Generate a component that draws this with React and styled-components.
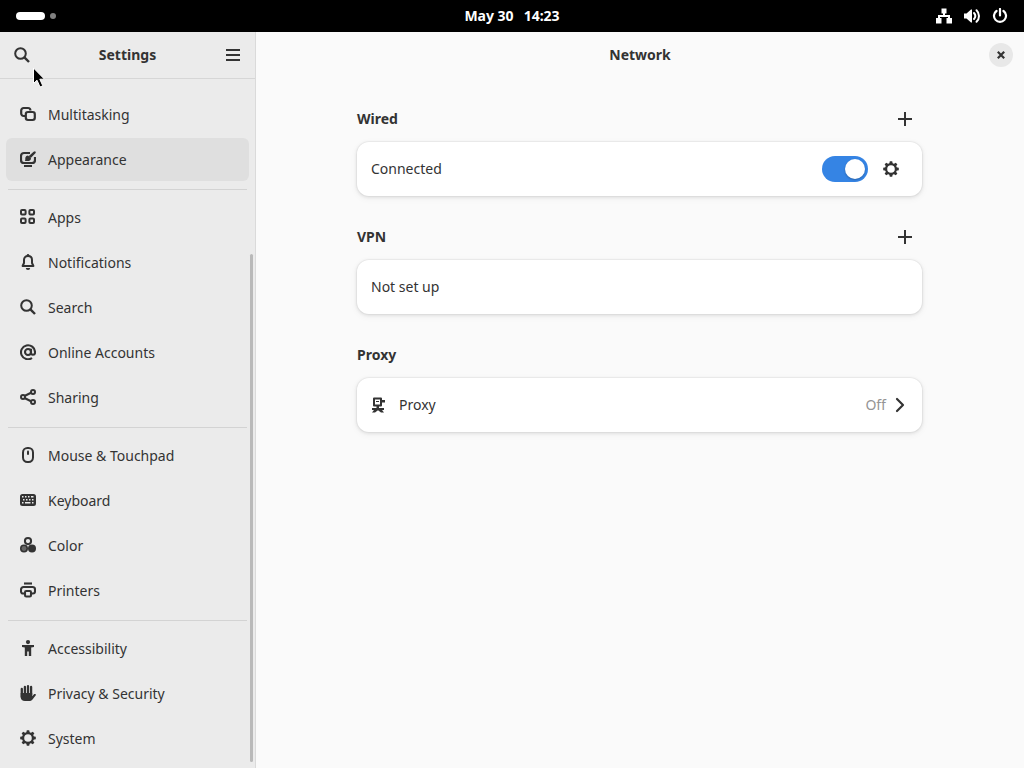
/**
*
* Settings, network panel
*
*/

import React from 'react'
import styled, { createGlobalStyle } from 'styled-components'

const GlobalStyle = createGlobalStyle`
  * {
    box-sizing: border-box;
  }

  body {
    margin: 0;
    background: #fafafa;
    color: #333;
    font-family: 'Noto Sans', 'Open Sans', sans-serif;
    font-size: 14px;
    line-height: 20px;
  }

  button {
    border: none;
    padding: 0;
    background: transparent;
    color: inherit;
    font: inherit;
    cursor: pointer;
  }

  h1, h2 {
    margin: 0;
    font-size: 14px;
    font-weight: 700;
  }
`

const Desktop = styled.div`
  display: flex;
  flex-direction: column;
  height: 100vh;
`

const TopBar = styled.header`
  display: grid;
  grid-template-columns: 1fr auto 1fr;
  align-items: center;
  flex: none;
  height: 32px;
  padding: 0 16px;
  background: #000;
  color: #fff;
`

const Workspaces = styled.button`
  display: flex;
  align-items: center;
  justify-self: start;
  gap: 5px;
`

const WorkspaceDot = styled.span`
  width: ${props => props.$active ? '29px' : '6px'};
  height: ${props => props.$active ? '8px' : '6px'};
  border-radius: 4px;
  background: ${props => props.$active ? '#fff' : '#808080'};
`

const Clock = styled.button`
  display: flex;
  gap: 10px;
  font-weight: 700;
`

const Status = styled.button`
  display: flex;
  justify-self: end;
  gap: 12px;
`

const Window = styled.div`
  display: flex;
  flex: 1;
  min-height: 0;
`

const Sidebar = styled.aside`
  position: relative;
  display: flex;
  flex-direction: column;
  flex: none;
  width: 256px;
  border-right: 1px solid #dadada;
  background: #ebebeb;
`

const HeaderBar = styled.div`
  display: grid;
  grid-template-columns: 34px 1fr 34px;
  align-items: center;
  flex: none;
  height: 47px;
  padding: 0 ${props => props.$line ? '5px' : '6px'};
  border-bottom: 1px solid ${props => props.$line ? '#d6d6d6' : 'transparent'};

  h1 {
    grid-column: 2;
    text-align: center;
  }
`

const IconButton = styled.button`
  display: flex;
  align-items: center;
  justify-content: center;
  width: 34px;
  height: 34px;
  border-radius: 8px;

  &:hover {
    background: rgba(0, 0, 0, 0.06);
  }
`

const CloseButton = styled(IconButton)`
  justify-self: center;
  width: 24px;
  height: 24px;
  border-radius: 12px;
  background: #e8e8e8;
`

const Nav = styled.nav`
  display: flex;
  flex-direction: column;
  flex: 1;
  gap: 2px;
  min-height: 0;
  padding: 14px 6px 8px;
  overflow: hidden;
`

const NavItem = styled.a`
  display: flex;
  align-items: center;
  flex: none;
  gap: 12px;
  height: 43px;
  padding: 0 14px;
  border-radius: 6px;
  background: ${props => props.$selected ? '#dfdfdf' : 'transparent'};
  color: inherit;
  text-decoration: none;

  svg {
    margin-bottom: 1px;
  }
`

const Separator = styled.hr`
  flex: none;
  align-self: stretch;
  height: 1px;
  margin: 6px 2px 4px;
  border: none;
  background: #d3d3d3;
`

const ScrollThumb = styled.div`
  position: absolute;
  right: 2px;
  bottom: 6px;
  width: 3px;
  height: 69%;
  border-radius: 2px;
  background: #b9b9b9;
`

const Main = styled.main`
  flex: 1;
  min-width: 0;
`

const Content = styled.div`
  display: flex;
  flex-direction: column;
  gap: 24px;
  max-width: 590px;
  margin: 0 auto;
  padding: 23px 13px 23px 12px;
`

const SectionHead = styled.div`
  display: flex;
  align-items: center;
  justify-content: space-between;
  height: 34px;
  margin-bottom: 6px;
`

const Card = styled.div`
  border-radius: 12px;
  background: #fff;
  box-shadow: 0 0 0 1px rgba(0, 0, 0, 0.03), 0 1px 3px 1px rgba(0, 0, 0, 0.07), 0 2px 6px 2px rgba(0, 0, 0, 0.03);
`

const Row = styled.div`
  display: flex;
  align-items: center;
  width: 100%;
  height: 54px;
  padding: 0 14px;
  text-align: left;

  svg {
    flex: none;
  }
`

const RowTitle = styled.label`
  flex: 1;
`

const RowLabel = styled.span`
  flex: 1;
  margin-left: 12px;
`

const RowValue = styled.span`
  margin-right: 6px;
  color: #949494;
`

const Switch = styled.input`
  appearance: none;
  display: flex;
  width: 46px;
  height: 26px;
  margin: 0 6px 0 0;
  padding: 3px;
  border-radius: 13px;
  background: #c9c9c9;
  cursor: pointer;

  &::before {
    content: '';
    width: 20px;
    height: 20px;
    border-radius: 10px;
    background: #fff;
    box-shadow: 0 1px 2px rgba(0, 0, 0, 0.25);
  }

  &:checked {
    justify-content: flex-end;
    background: #3584e4;
  }
`

const Pointer = styled.svg`
  position: absolute;
  top: 67px;
  left: 32px;
  pointer-events: none;
`

const gear = (
  <g>
    <circle cx='8' cy='8' r='4.9' fill='none' stroke='currentColor' strokeWidth='2.2' />
    {[0, 45, 90, 135, 180, 225, 270, 315].map(a => (
      <path key={a} d='M6.2 3 L6.8 0.2 H9.2 L9.8 3z' transform={`rotate(${a} 8 8)`} />
    ))}
  </g>
)

const line = { fill: 'none', stroke: 'currentColor', strokeWidth: 2 }

const icons = {
  search: <g {...line}><circle cx='6.5' cy='6.5' r='5.3' /><path d='M10.4 10.4 L15 15' strokeWidth='2.4' /></g>,
  menu: <path d='M1 2h14v2H1zM1 7h14v2H1zM1 12h14v2H1z' />,
  close: <path d='M4.8 4.8 L11.2 11.2 M11.2 4.8 L4.8 11.2' {...line} strokeWidth='2.2' />,
  plus: <path d='M7 1h2v6h6v2H9v6H7V9H1V7h6z' />,
  chevron: <path d='M5 2 L11 8 L5 14' {...line} strokeWidth='2.2' strokeLinejoin='round' strokeLinecap='round' />,
  multitasking: (
    <g {...line} strokeWidth='2.2'>
      <path d='M5 10 H3.6 A2.4 2.4 0 0 1 1.2 7.6 V4.4 A2.4 2.4 0 0 1 3.6 2 H8 A2.4 2.4 0 0 1 10.4 4.4' />
      <rect x='5.8' y='6' width='9' height='8' rx='2.2' />
    </g>
  ),
  appearance: (
    <g>
      <path d='M10 2 H4 A3 3 0 0 0 1 5 V9 A3 3 0 0 0 4 12 H12 A3 3 0 0 0 15 9 V6' {...line} strokeWidth='2.2' />
      <path d='M4 14 H12 V16 H4z' />
      <path d='M15 0.2 C16 0.6 16 1.6 15.4 2.2 L10.8 7 L8.6 5.2 L13.6 0.7z' />
      <path d='M8 4.5 L11 7.2 C11 9.8 9 10.4 4.8 10 C5.8 9 5 8 5.4 6.6 C5.8 5.2 6.8 4.5 8 4.5z' />
    </g>
  ),
  apps: (
    <g {...line}>
      <rect x='1' y='1' width='4.6' height='4.6' rx='1' />
      <rect x='9.4' y='1' width='4.6' height='4.6' rx='1' />
      <rect x='1' y='9.4' width='4.6' height='4.6' rx='1' />
      <rect x='9.4' y='9.4' width='4.6' height='4.6' rx='1' />
    </g>
  ),
  bell: (
    <g>
      <path d='M8 2 C5.4 2 4 3.8 4 6 V9 L2.6 12 H13.4 L12 9 V6 C12 3.8 10.6 2 8 2z' {...line} strokeLinejoin='round' />
      <circle cx='8' cy='1.4' r='1.3' />
      <path d='M5.8 14 H10.2 A2.2 2 0 0 1 5.8 14z' />
    </g>
  ),
  at: (
    <g {...line} strokeWidth='2.1'>
      <path d='M12 14 A7 7 0 1 1 15 8 V8.8 A2 2 0 0 1 11 8.8 V4.8' />
      <circle cx='8' cy='8' r='3' />
    </g>
  ),
  share: (
    <g {...line}>
      <path d='M4.5 7 L11 3.8 M4.5 9 L11 12.2' strokeWidth='2.2' />
      <circle cx='3' cy='8' r='2' />
      <circle cx='13' cy='3' r='2' />
      <circle cx='13' cy='13' r='2' />
    </g>
  ),
  mouse: (
    <g {...line}>
      <rect x='3' y='1' width='10' height='14' rx='4.4' />
      <path d='M8 4.5 V7' strokeLinecap='round' />
    </g>
  ),
  keyboard: (
    <path
      fillRule='evenodd'
      d='M2.5 2h11A2.5 2.5 0 0 1 16 4.5v7a2.5 2.5 0 0 1-2.5 2.5h-11A2.5 2.5 0 0 1 0 11.500v-7A2.5 2.5 0 0 1 2.5 2zM2 4v1.500h1.500V4zM5 4v1.500h1.500V4zM8 4v1.500h1.500V4zM11 4v1.500h2.500V4zM3 7v1.500h1.500V7zM6 7v1.500h1.500V7zM9 7v1.500h1.500V7zM12 7v1.500h1.500V7zM2 10v1.500h1.500V10zM5 10v1.500h5.500V10zM12 10v1.500h1.500V10z'
    />
  ),
  color: (
    <g>
      <circle cx='8' cy='4.1' r='3.1' {...line} />
      <circle cx='4' cy='11.5' r='4' />
      <circle cx='12' cy='11.5' r='4' />
      <circle cx='4' cy='11.5' r='2.4' fill='#666' />
    </g>
  ),
  printer: (
    <g {...line} strokeWidth='2.1'>
      <path d='M4 1.5 H12' />
      <path d='M4 11.5 H3 A2 2 0 0 1 1 9.5 V7.5 A2.5 2.5 0 0 1 3.5 5 H12.5 A2.5 2.5 0 0 1 15 7.5 V9.5 A2 2 0 0 1 13 11.5 H12' />
      <rect x='5' y='9' width='6' height='5.5' rx='1.2' />
    </g>
  ),
  person: (
    <g>
      <circle cx='8' cy='2.1' r='2.1' />
      <path d='M2 5 H14 V7 L11.2 7.5 V16 H8.800 V11.500 H7.200 V16 H4.800 V7.500 L2 7z' />
    </g>
  ),
  hand: (
    <g>
      <path
        d='M1.8 12 V4 M4.9 10 V2 M8 10 V1.2 M11.1 10 V2'
        fill='none' stroke='currentColor' strokeWidth='2.3' strokeLinecap='round'
      />
      <path d='M0.7 8 H12.2 V11.2 L14.2 9 C15.6 8.6 16.4 9.6 15.6 10.6 L12.5 14.5 C11.5 15.7 10.5 16 9 16 H5 C2.4 16 0.7 14.5 0.7 12z' />
    </g>
  ),
  proxy: (
    <g>
      <path d='M3 1.500 H10 V8.500 H3z' {...line} strokeLinejoin='round' />
      <path d='M5 4h3v1H5zM10 3h4v2.500h-4zM5.500 9h2.500v3H5.500zM1 11h12v2H1z' />
      <path d='M4.500 11 H9.500 L13 15.500 H10 L7 13.300 L4 15.500 H1z' />
    </g>
  ),
  wired: (
    <path d='M5.5 0.500h5v5H9V7h5v3h2v5.500h-5.500V10H12V9H4v1h1.500v5.500H0V10h2V7h5V5.500H5.500z' />
  ),
  volume: (
    <g>
      <path d='M0 5.5 H2.5 L7 1.5 H8 V14.500 H7 L2.500 10.500 H0z' />
      <path d='M10 5 A4.500 4.500 0 0 1 10 11 M12.500 2.200 A8 8 0 0 1 12.500 13.800' {...line} strokeLinecap='round' />
    </g>
  ),
  power: <path d='M4.5 3 A6 6 0 1 0 11.5 3 M8 1 V7.500' {...line} strokeWidth='2.2' strokeLinecap='round' />,
  gear
}

const Icon = ({ name }) => (
  <svg width='16' height='16' viewBox='0 0 16 16' fill='currentColor' aria-hidden='true'>
    {icons[name]}
  </svg>
)

const groups = [
  [
    ['multitasking', 'Multitasking'],
    ['appearance', 'Appearance']
  ],
  [
    ['apps', 'Apps'],
    ['bell', 'Notifications'],
    ['search', 'Search'],
    ['at', 'Online Accounts'],
    ['share', 'Sharing']
  ],
  [
    ['mouse', 'Mouse & Touchpad'],
    ['keyboard', 'Keyboard'],
    ['color', 'Color'],
    ['printer', 'Printers']
  ],
  [
    ['person', 'Accessibility'],
    ['hand', 'Privacy & Security'],
    ['gear', 'System']
  ]
]

const Section = ({ title, onAdd, children }) => (
  <section>
    <SectionHead>
      <h2>{title}</h2>
      {onAdd && (
        <IconButton aria-label={`Add ${title}`} onClick={onAdd}>
          <Icon name='plus' />
        </IconButton>
      )}
    </SectionHead>
    <Card>{children}</Card>
  </section>
)

class App extends React.Component {
  state = {
    connected: true,
    selected: 'Appearance'
  }

  add = () => {}

  render () {
    return (
      <Desktop>
        <GlobalStyle />
        <TopBar>
          <Workspaces aria-label='Activities'>
            <WorkspaceDot $active />
            <WorkspaceDot />
          </Workspaces>
          <Clock>
            <span>May 30</span>
            <span>14:23</span>
          </Clock>
          <Status aria-label='System menu'>
            <Icon name='wired' />
            <Icon name='volume' />
            <Icon name='power' />
          </Status>
        </TopBar>
        <Window>
          <Sidebar>
            <HeaderBar $line>
              <IconButton aria-label='Search'><Icon name='search' /></IconButton>
              <h1>Settings</h1>
              <IconButton aria-label='Main menu'><Icon name='menu' /></IconButton>
            </HeaderBar>
            <Nav>
              {groups.map((items, i) => (
                <React.Fragment key={i}>
                  {i > 0 && <Separator />}
                  {items.map(([icon, label]) => (
                    <NavItem
                      key={label}
                      href='#'
                      $selected={this.state.selected === label}
                      onClick={() => this.setState({ selected: label })}
                    >
                      <Icon name={icon} />
                      <span>{label}</span>
                    </NavItem>
                  ))}
                </React.Fragment>
              ))}
            </Nav>
            <ScrollThumb />
          </Sidebar>
          <Main>
            <HeaderBar>
              <h1>Network</h1>
              <CloseButton aria-label='Close'><Icon name='close' /></CloseButton>
            </HeaderBar>
            <Content>
              <Section title='Wired' onAdd={this.add}>
                <Row>
                  <RowTitle htmlFor='wired'>Connected</RowTitle>
                  <Switch
                    id='wired'
                    type='checkbox'
                    role='switch'
                    checked={this.state.connected}
                    onChange={e => this.setState({ connected: e.target.checked })}
                  />
                  <IconButton aria-label='Wired options'><Icon name='gear' /></IconButton>
                </Row>
              </Section>
              <Section title='VPN' onAdd={this.add}>
                <Row>Not set up</Row>
              </Section>
              <Section title='Proxy'>
                <Row as='button'>
                  <Icon name='proxy' />
                  <RowLabel>Proxy</RowLabel>
                  <RowValue>Off</RowValue>
                  <Icon name='chevron' />
                </Row>
              </Section>
            </Content>
          </Main>
        </Window>
        <Pointer width='14' height='22' viewBox='0 0 14 22'>
          <path d='M1.5 1 V16.5 L5 13.2 L8 20 L10.8 18.8 L7.8 12.2 H12.5z' fill='#000' stroke='#fff' strokeWidth='1' />
        </Pointer>
      </Desktop>
    )
  }
}

export default App
